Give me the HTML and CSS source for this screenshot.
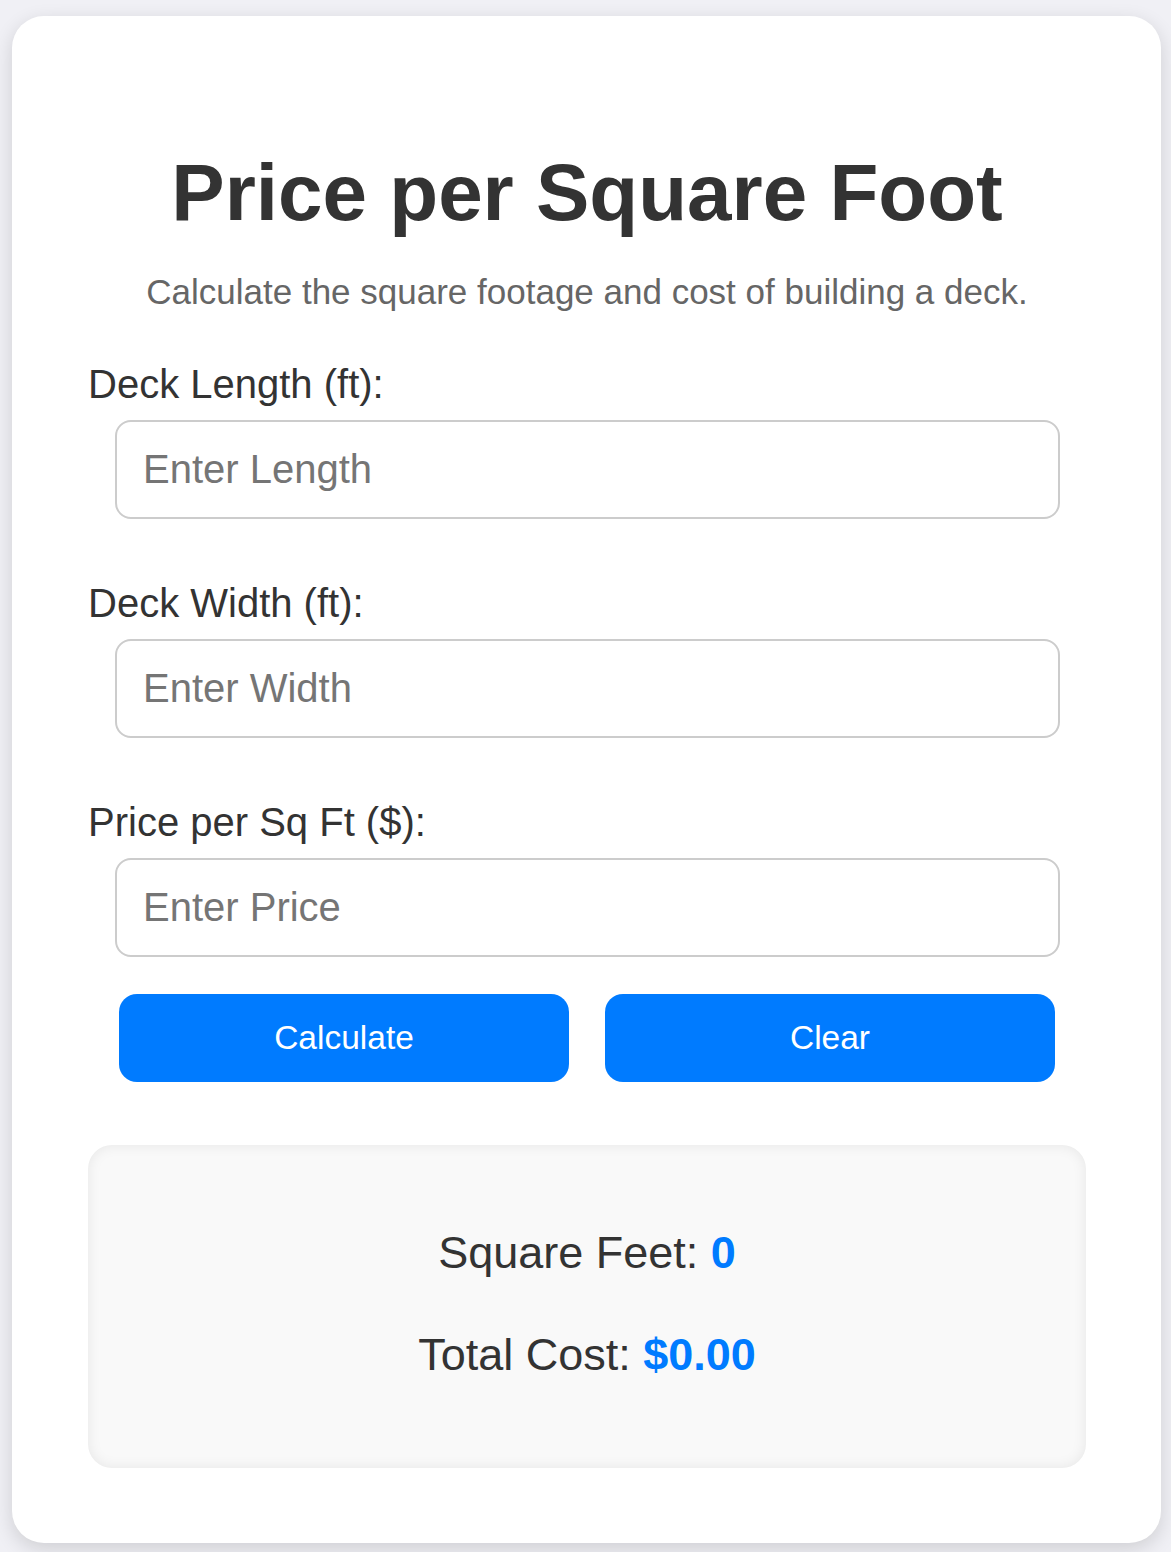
FILE: index.html
```
<!DOCTYPE html>
<html lang="en">
<head>
<meta charset="utf-8">
<title>Price per Square Foot</title>
<link rel="stylesheet" href="styles.css">
</head>
<body>
<main class="card">
  <h1 class="title">Price per Square Foot</h1>
  <p class="subtitle">Calculate the square footage and cost of building a deck.</p>
  <div class="field">
    <label class="label" for="len">Deck Length (ft):</label>
    <input class="input" id="len" type="text" placeholder="Enter Length">
  </div>
  <div class="field">
    <label class="label" for="wid">Deck Width (ft):</label>
    <input class="input" id="wid" type="text" placeholder="Enter Width">
  </div>
  <div class="field">
    <label class="label" for="price">Price per Sq Ft ($):</label>
    <input class="input" id="price" type="text" placeholder="Enter Price">
  </div>
  <div class="buttons">
    <button class="btn" type="button">Calculate</button>
    <button class="btn" type="button">Clear</button>
  </div>
  <section class="result">
    <p class="result-line">Square Feet: <span class="value">0</span></p>
    <p class="result-line result-total">Total Cost: <span class="value">$0.00</span></p>
  </section>
</main>
</body>
</html>
```
FILE: styles.css
```
html, body {
  margin: 0;
  padding: 0;
}
body {
  background: #f0f0f5;
  font-family: "Liberation Sans", Arial, sans-serif;
  color: #333;
  padding: 16px 10px 9px 12px;
  box-sizing: border-box;
  min-height: 1552px;
}
.card {
  background: #fff;
  border-radius: 32px;
  box-shadow: 0 6px 20px rgba(0, 0, 0, 0.14);
  padding: 136px 75px 75px 76px;
  box-sizing: border-box;
}
.title {
  margin: 0;
  text-align: center;
  font-size: 80px;
  font-weight: bold;
  line-height: 81px;
  color: #333;
}
.subtitle {
  margin: 38px 0 0;
  text-align: center;
  font-size: 35px;
  line-height: 42px;
  color: #666;
}
.field {
  margin-top: 47px;
  display: flex;
  flex-direction: column;
}
.field + .field {
  margin-top: 60px;
}
.label {
  font-size: 40px;
  line-height: 48px;
  color: #333;
}
.input {
  margin: 12px 26px 0 27px;
  height: 99px;
  box-sizing: border-box;
  border: 2px solid #ccc;
  border-radius: 16px;
  padding: 0 26px;
  font-family: "Liberation Sans", Arial, sans-serif;
  font-size: 40px;
  color: #333;
  background: #fff;
  outline: none;
}
.input::placeholder {
  color: #757575;
}
.buttons {
  display: flex;
  gap: 36px;
  margin: 37px 31px 0 31px;
}
.btn {
  flex: 1;
  height: 88px;
  border: none;
  border-radius: 18px;
  background: #007bff;
  color: #fff;
  font-family: "Liberation Sans", Arial, sans-serif;
  font-size: 33.5px;
}
.result {
  margin-top: 63px;
  background: #f9f9f9;
  border-radius: 24px;
  box-shadow: inset 0 0 14px rgba(0, 0, 0, 0.08);
  padding: 81px 20px 86px;
  text-align: center;
}
.result-line {
  margin: 0;
  font-size: 45px;
  line-height: 54px;
  color: #333;
}
.result-total {
  margin-top: 48px;
}
.value {
  color: #007bff;
  font-weight: bold;
}
```
